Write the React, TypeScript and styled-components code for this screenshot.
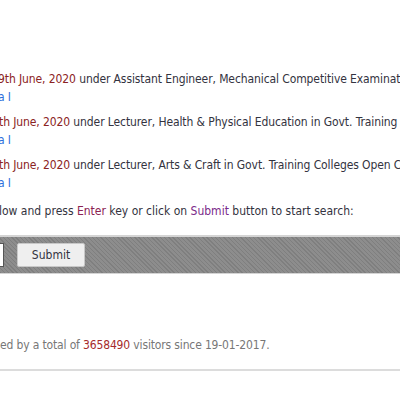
import React from "react";
import styled, { createGlobalStyle } from "styled-components";

const GlobalStyle = createGlobalStyle`
  html, body {
    margin: 0;
    padding: 0;
    background: #ffffff;
  }
  body {
    font-family: 'DejaVu Sans Condensed', 'Liberation Sans', sans-serif;
    font-size: 12px;
    color: #333340;
    overflow: hidden;
  }
`;

const Page = styled.div`
  width: 400px;
  height: 400px;
  overflow: hidden;
  padding-top: 70px;
  box-sizing: border-box;
`;

const Notice = styled.div`
  margin-bottom: 7px;
  line-height: 18px;
  white-space: nowrap;
  letter-spacing: -0.1px;
`;

const Line = styled.div<{ $shift: number }>`
  margin-left: ${(p) => p.$shift}px;
`;

const DateText = styled.span`
  color: #8b2323;
`;

const LinkText = styled.a`
  color: #2f6fdc;
  text-decoration: none;
`;

const Instruction = styled.p`
  margin: 10px 0 0 -1px;
  line-height: 18px;
  white-space: nowrap;
`;

const KeyWord = styled.span<{ $tone: string }>`
  color: ${(p) => p.$tone};
`;

const SearchBand = styled.form`
  margin-top: 15px;
  height: 36px;
  display: flex;
  align-items: center;
  gap: 13px;
  border-top: 2px solid #d4d4d4;
  border-bottom: 1px solid #d4d4d4;
  background-color: #878787;
  background-image: repeating-linear-gradient(
    45deg,
    #7f7f7f 0px,
    #7f7f7f 1px,
    #8d8d8d 1px,
    #8d8d8d 3px
  );
`;

const SearchInput = styled.input`
  margin-left: -146px;
  width: 150px;
  height: 24px;
  box-sizing: border-box;
  border: 1px solid #555;
  background: #fff;
  padding: 0;
`;

const SubmitButton = styled.button`
  width: 68px;
  height: 24px;
  border: 1px solid #c8c8c8;
  border-radius: 2px;
  background: #efefef;
  font-family: 'DejaVu Sans Condensed', 'Liberation Sans', sans-serif;
  font-size: 12px;
  color: #333340;
  padding: 0;
`;

const Footer = styled.div`
  margin-top: 62px;
  padding-bottom: 15px;
  border-bottom: 2px solid #dcdcdc;
  color: #777;
  line-height: 18px;
  white-space: nowrap;
  letter-spacing: -0.15px;
`;

const Counter = styled.span`
  color: #a52a2a;
`;

const notices = [
  { date: "9th June, 2020", rest: " under Assistant Engineer, Mechanical Competitive Examination", shift: -2 },
  { date: "th June, 2020", rest: " under Lecturer, Health & Physical Education in Govt. Training Colleges", shift: -1 },
  { date: "th June, 2020", rest: " under Lecturer, Arts & Craft in Govt. Training Colleges Open Competitive", shift: -1 },
];

export default function App(): JSX.Element {
  return (
    <>
      <GlobalStyle />
      <Page>
        {notices.map((n, i) => (
          <Notice key={i}>
            <Line $shift={n.shift}>
              <DateText>{n.date}</DateText>
              {n.rest}
            </Line>
            <Line $shift={-2}>
              <LinkText href="#">a I</LinkText>
            </Line>
          </Notice>
        ))}
        <Instruction>
          low and press <KeyWord $tone="#8b2252">Enter</KeyWord> key or click on{" "}
          <KeyWord $tone="#7a2a8a">Submit</KeyWord> button to start search:
        </Instruction>
        <SearchBand onSubmit={(e) => e.preventDefault()}>
          <SearchInput type="text" />
          <SubmitButton type="submit">Submit</SubmitButton>
        </SearchBand>
        <Footer>
          ed by a total of <Counter>3658490</Counter> visitors since 19-01-2017.
        </Footer>
      </Page>
    </>
  );
}
